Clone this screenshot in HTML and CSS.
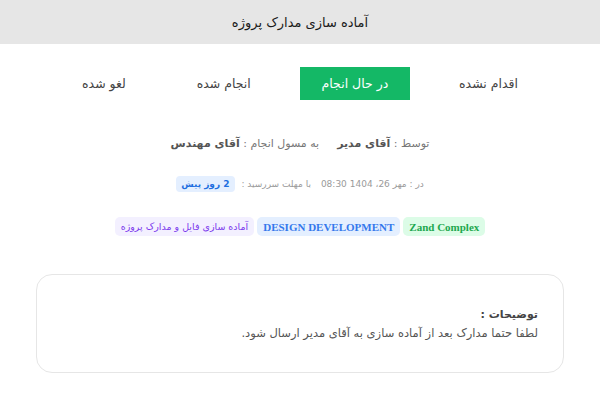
FILE: index.html
```html
<!DOCTYPE html>
<html lang="fa" dir="rtl">
<head>
<meta charset="utf-8">
<title>آماده سازی مدارک پروژه</title>
<link rel="stylesheet" href="styles.css">
</head>
<body>
<header class="topbar">آماده سازی مدارک پروژه</header>
<main class="content">
  <nav class="tabs">
    <span class="tab">اقدام نشده</span>
    <span class="tab tab-active">در حال انجام</span>
    <span class="tab">انجام شده</span>
    <span class="tab">لغو شده</span>
  </nav>
  <div class="meta">
    <span class="meta-item">توسط : <b class="name">آقای مدیر</b></span>
    <span class="meta-item">به مسول انجام : <b class="name">آقای مهندس</b></span>
  </div>
  <div class="dates">
    <span class="date-item">در : مهر 26، 1404 08:30</span>
    <span class="date-item">با مهلت سررسید : <span class="badge">2 روز پیش</span></span>
  </div>
  <div class="tags">
    <span class="tag tag-green">Zand Complex</span>
    <span class="tag tag-blue">DESIGN DEVELOPMENT</span>
    <span class="tag tag-purple">آماده سازی فایل و مدارک پروژه</span>
  </div>
  <section class="card">
    <h2 class="card-title">توضیحات :</h2>
    <p class="card-text">لطفا حتما مدارک بعد از آماده سازی به آقای مدیر ارسال شود.</p>
  </section>
</main>
</body>
</html>
```
FILE: styles.css
```css
* { box-sizing: border-box; }
html, body { margin: 0; padding: 0; }
body {
  width: 600px;
  height: 400px;
  background: #ffffff;
  font-family: "DejaVu Sans", "Noto Sans", sans-serif;
  color: #333;
  overflow: hidden;
}
.topbar {
  height: 44px;
  background: #e6e6e6;
  display: flex;
  align-items: center;
  justify-content: center;
  font-size: 13px;
  color: #1a1a1a;
}
.content {
  padding: 23px 36px 0;
}
.tabs {
  display: flex;
  justify-content: space-between;
  margin: 0 24px;
}
.tab {
  height: 33px;
  padding: 0 22px;
  display: flex;
  align-items: center;
  font-size: 12.5px;
  color: #444;
}
.tab-active {
  background: #14b866;
  color: #ffffff;
}
.meta {
  margin-top: 33px;
  display: flex;
  justify-content: center;
  gap: 18px;
  font-size: 11px;
  color: #777;
  height: 20px;
  align-items: center;
}
.name { color: #555; font-weight: bold; }
.dates {
  margin-top: 22px;
  height: 18px;
  display: flex;
  justify-content: center;
  gap: 10px;
  font-size: 9px;
  color: #9a9a9a;
  align-items: center;
}
.badge {
  display: inline-block;
  background: #e4efff;
  color: #1f6fe0;
  font-weight: bold;
  font-size: 9px;
  line-height: 12px;
  padding: 2px 5px;
  border-radius: 4px;
  margin-right: 4px;
}
.tags {
  margin-top: 24px;
  display: flex;
  justify-content: center;
  gap: 3px;
  align-items: center;
}
.tag {
  height: 19px;
  display: inline-flex;
  align-items: center;
  padding: 0 6px;
  border-radius: 5px;
  font-size: 9.5px;
}
.tag-green {
  background: #dcfce7;
  color: #1ea84f;
  font-family: "Liberation Serif", serif;
  font-weight: bold;
  font-size: 11px;
}
.tag-blue {
  background: #e4efff;
  color: #3478ec;
  font-family: "Liberation Serif", serif;
  font-weight: bold;
  font-size: 11px;
}
.tag-purple {
  background: #f3f0ff;
  color: #7c3aed;
}
.card {
  margin-top: 38px;
  height: 99px;
  border: 1px solid #e6e6e6;
  border-radius: 16px;
  padding: 30px 25px 0;
}
.card-title {
  margin: 0;
  font-size: 11px;
  font-weight: bold;
  color: #444;
  line-height: 19px;
}
.card-text {
  margin: 0;
  font-size: 11.5px;
  color: #555;
  line-height: 19px;
}
```
